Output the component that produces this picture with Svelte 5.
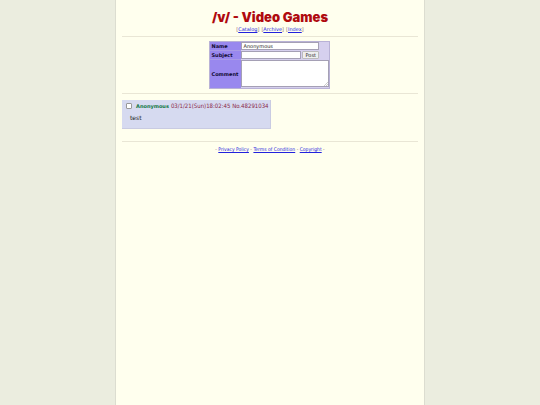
<script>
    const boardLinks = ['Catalog', 'Archive', 'Index'];
    const footerLinks = ['Privacy Policy', 'Terms of Condition', 'Copyright'];

    let posts = $state([
        { id: 48291034, name: 'Anonymous', date: '03/1/21(Sun)18:02:45', text: 'test', checked: false }
    ]);

    let name = $state('Anonymous');
    let subject = $state('');
    let comment = $state('');

    function submitPost(e) {
        e.preventDefault();
        if (!comment.trim()) return;
        const id = posts[posts.length - 1].id + 1;
        posts.push({ id, name, date: new Date().toLocaleString(), text: comment, checked: false });
        comment = '';
    }
</script>

<div class="board">
    <header>
        <h1>/v/ - Video Games</h1>
        <nav>
            {#each boardLinks as link}
                <span>[<a href="#{link.toLowerCase()}">{link}</a>]</span>
            {/each}
        </nav>
    </header>

    <hr />

    <form onsubmit={submitPost}>
        <table>
            <tbody>
                <tr>
                    <th><label for="name">Name</label></th>
                    <td><input id="name" class="name" type="text" bind:value={name} /></td>
                </tr>
                <tr>
                    <th><label for="subject">Subject</label></th>
                    <td>
                        <div class="line">
                            <input id="subject" class="subject" type="text" bind:value={subject} />
                            <button type="submit">Post</button>
                        </div>
                    </td>
                </tr>
                <tr>
                    <th><label for="comment">Comment</label></th>
                    <td>
                        <div class="comment">
                            <textarea id="comment" bind:value={comment}></textarea>
                            <svg viewBox="0 0 4 4" aria-hidden="true">
                                <path d="M0 4L4 0M2 4L4 2" stroke="#999" stroke-width="0.5" />
                            </svg>
                        </div>
                    </td>
                </tr>
            </tbody>
        </table>
    </form>

    <hr />

    {#each posts as post (post.id)}
        <article class="post">
            <div class="info">
                <input type="checkbox" aria-label="Select post {post.id}" bind:checked={post.checked} />
                <b>{post.name}</b>
                <span>{post.date} No.{post.id}</span>
            </div>
            <p>{post.text}</p>
        </article>
    {/each}

    <hr class="last" />

    <footer>
        -
        {#each footerLinks as link}
            <a href="#{link.toLowerCase().replaceAll(' ', '-')}">{link}</a>{' - '}
        {/each}
    </footer>
</div>

<style>
    :global(body) {
        background: #ebeddf;
        font-family: 'DejaVu Sans', Verdana, sans-serif;
        font-size: 5px;
        line-height: 6px;
    }

    .board {
        box-sizing: border-box;
        width: 57.4%;
        min-height: 100vh;
        margin: 0 auto;
        padding: 10px 6px;
        background: #ffffee;
        border: solid #dcddd0;
        border-width: 0 1px;
    }

    header { text-align: center; }

    h1 {
        margin: 0 0 2px;
        color: #af0a0f;
        font: 900 13px/14px Inter, 'Liberation Sans', sans-serif;
    }

    nav {
        display: flex;
        justify-content: center;
        gap: 2px;
        color: #8c6a62;
    }

    a { color: #2222dd; }

    hr {
        height: 1px;
        margin: 4px 0;
        border: 0;
        background: #e9e6d5;
    }

    table {
        margin: 0 auto;
        border: 1px solid #b9b2d6;
        border-spacing: 0;
        background: #d6d0ee;
    }

    th, td { padding: 0; }

    td { padding-bottom: 1px; }

    th {
        width: 30px;
        padding-left: 1px;
        background: #9988ee;
        border-bottom: 1px solid #a99be6;
        color: #110a33;
        text-align: left;
    }

    tr:last-child th { border-bottom: 0; }

    .line { display: flex; gap: 1px; }

    input[type='text'], textarea {
        display: block;
        box-sizing: border-box;
        border: 1px solid #a5a0b5;
        padding: 0 1px;
        background: #fff;
        color: #222;
        font: 5px/6px 'DejaVu Sans', Verdana, sans-serif;
    }

    input[type='text'] { height: 8px; }
    .name { width: 78px; }
    .subject { width: 60px; }

    .comment { position: relative; }

    textarea {
        width: 88px;
        height: 27px;
        resize: none;
    }

    .comment svg {
        position: absolute;
        right: 1px;
        bottom: 1px;
        width: 4px;
        height: 4px;
    }

    button {
        height: 8px;
        padding: 0 2px;
        border: 1px solid #bbb;
        border-radius: 1px;
        background: #efefef;
        color: #222;
        font: 5px/6px 'DejaVu Sans', Verdana, sans-serif;
    }

    .post {
        width: fit-content;
        margin-top: 6px;
        padding: 3px 1px 7px 4px;
        border: solid #c9cbe2;
        border-width: 0 1px 1px 0;
        background: #d6daf0;
    }

    .info {
        display: flex;
        align-items: center;
        gap: 2px;
        color: #8a2846;
    }

    .info b { color: #117743; }

    .info span { font: 6px/6px 'DejaVu Sans Condensed', 'DejaVu Sans', sans-serif; }

    input[type='checkbox'] {
        appearance: none;
        box-sizing: border-box;
        width: 6px;
        height: 6px;
        margin: 0 2px 0 0;
        border: 1px solid #999;
        border-radius: 1px;
        background: #fff;
    }

    input[type='checkbox']:checked { background: #2222dd; }

    p {
        margin: 5px 4px 0;
        color: #222;
        font-size: 6px;
        line-height: 7px;
    }

    .last { margin-top: 12px; }

    footer {
        color: #8c6a62;
        font-family: 'DejaVu Sans Condensed', 'DejaVu Sans', sans-serif;
        text-align: center;
    }
</style>
